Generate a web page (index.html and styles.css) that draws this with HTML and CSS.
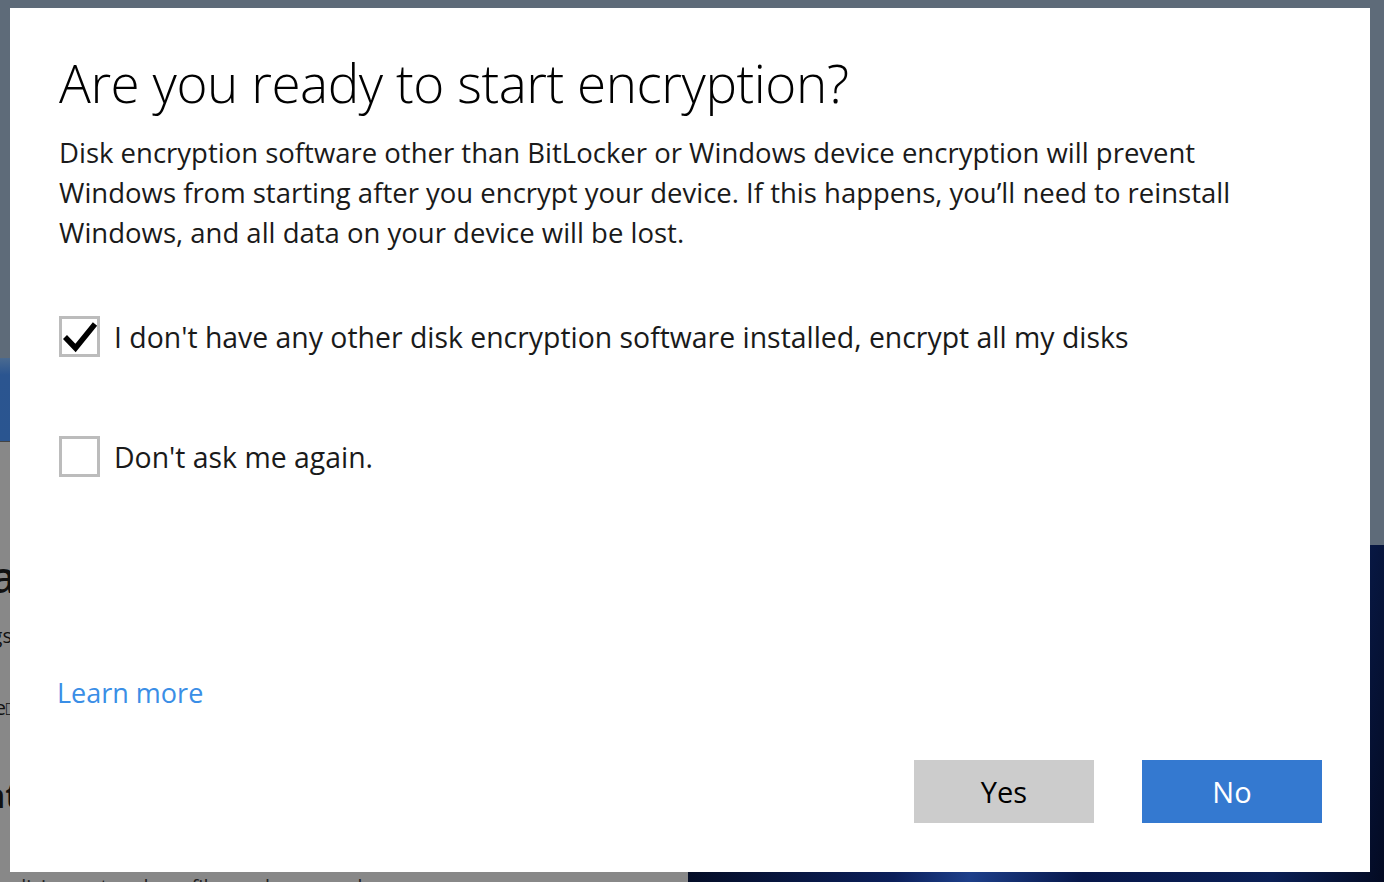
FILE: index.html
```html
<!DOCTYPE html>
<html lang="en">
<head>
    <meta charset="UTF-8">
    <meta name="viewport" content="width=device-width, initial-scale=1.0">
    <title>BitLocker</title>
    <link rel="stylesheet" href="styles.css">
</head>
<body>
    <!-- Desktop behind the dimmed dialog -->
    <div class="wallpaper-band"></div>
    <div class="wallpaper-dark"></div>
    <div class="settings-window">
        <div class="peek">
            <div class="peek-heading">Data</div>
            <div class="peek-small">Settings</div>
            <div class="peek-small second">Manage□</div>
            <div class="peek-bold">Account</div>
        </div>
        <div class="settings-line">policies, network profiles and managed</div>
    </div>

    <div class="dialog">
        <h1>Are you ready to start encryption?</h1>
        <p class="intro">Disk encryption software other than BitLocker or Windows device encryption will prevent<br>
            Windows from starting after you encrypt your device. If this happens, you’ll need to reinstall<br>
            Windows, and all data on your device will be lost.</p>

        <!-- Options -->
        <label class="option first">
            <input type="checkbox" checked>
            <span class="box">
                <svg viewBox="0 0 41 41" width="41" height="41"><path d="M6 21 L16.5 32 L36 8" fill="none" stroke="#000" stroke-width="5.5"/></svg>
            </span>
            <span class="text">I don't have any other disk encryption software installed, encrypt all my disks</span>
        </label>
        <label class="option">
            <input type="checkbox">
            <span class="box"></span>
            <span class="text">Don't ask me again.</span>
        </label>

        <a class="learn" href="#">Learn more</a>

        <div class="buttons">
            <button class="btn yes">Yes</button>
            <button class="btn no">No</button>
        </div>
    </div>
</body>
</html>
```

FILE: styles.css
```css
html, body {
    margin: 0;
    height: 100%;
}

body {
    background-color: #5e6b79;
    font-family: "Open Sans", "Noto Sans", sans-serif;
    padding: 8px 14px 10px 10px;
    box-sizing: border-box;
    overflow: hidden;
    position: relative;
}

/* desktop pieces peeking round the dialog */
.wallpaper-band {
    position: absolute;
    left: 0;
    top: 358px;
    width: 700px;
    height: 84px;
    background: linear-gradient(180deg, #4a6a90 0%, #2b5590 20%, #2a5590 100%);
}

.wallpaper-dark {
    position: absolute;
    left: 688px;
    right: 0;
    top: 545px;
    bottom: 0;
    background: linear-gradient(100deg, #020818 0%, #0b1f5a 35%, #1d3f8a 45%, #07174a 60%, #0a1f55 85%, #030a22 100%);
}

.settings-window {
    position: absolute;
    left: 0;
    top: 441px;
    width: 688px;
    bottom: 0;
    background-color: #888888;
    border-top: 1px solid #444;
    color: #111;
}

.peek {
    position: absolute;
    right: 100%;
    margin-right: -16px;
    top: 0;
    width: 400px;
    text-align: right;
}

.peek-heading {
    position: absolute;
    right: 0;
    top: 104px;
    font-size: 44px;
    font-weight: 600;
}

.peek-small {
    position: absolute;
    right: 4px;
    top: 180px;
    font-size: 20px;
}

.peek-small.second {
    top: 252px;
    right: -2px;
}

.peek-bold {
    position: absolute;
    right: -4px;
    top: 330px;
    font-size: 34px;
    font-weight: 700;
}

.settings-line {
    position: absolute;
    left: -3px;
    top: 431px;
    font-size: 20px;
    color: #222;
    white-space: nowrap;
}

.dialog {
    position: relative;
    z-index: 1;
    background-color: #fff;
    height: 864px;
    box-sizing: border-box;
    padding: 0 48px 49px 49px;
    display: flex;
    flex-direction: column;
}

h1 {
    font-weight: 300;
    font-size: 53px;
    line-height: 60px;
    color: #000;
    margin: 45px 0 0;
    letter-spacing: -0.45px;
}

.intro {
    font-size: 27.5px;
    line-height: 40px;
    color: #1a1a1a;
    margin: 20px 0 0;
    white-space: nowrap;
}

.option {
    display: flex;
    align-items: center;
    gap: 14px;
    font-size: 28.4px;
    color: #1a1a1a;
    cursor: pointer;
}

.option.first {
    margin-top: 63px;
}

.option + .option {
    margin-top: 79px;
}

.option input {
    display: none;
}

.box {
    width: 41px;
    height: 41px;
    box-sizing: border-box;
    border: 3px solid #bcbcbc;
    background: #fff;
    flex-shrink: 0;
    position: relative;
}

.box svg {
    position: absolute;
    left: -3px;
    top: -3px;
}

.learn {
    margin-top: auto;
    font-size: 27px;
    color: #3a8ee6;
    text-decoration: none;
    align-self: flex-start;
    margin-left: -2px;
}

.buttons {
    display: flex;
    justify-content: flex-end;
    gap: 48px;
    margin-top: 49px;
}

.btn {
    width: 180px;
    height: 63px;
    border: none;
    font-family: inherit;
    font-size: 29px;
    font-weight: 500;
    cursor: pointer;
}

.yes {
    background-color: #cccccc;
    color: #000;
}

.no {
    background-color: #3479d0;
    color: #fff;
}
```
